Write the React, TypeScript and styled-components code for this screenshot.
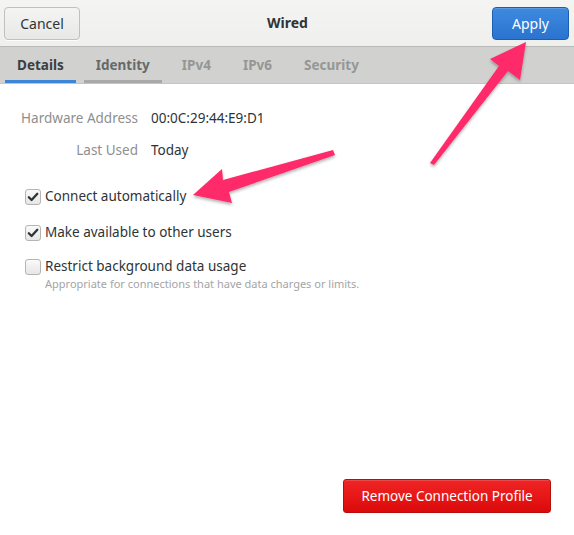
import React from "react";
import styled, { createGlobalStyle } from "styled-components";

const Global = createGlobalStyle`
  html, body { margin: 0; padding: 0; background: #ffffff; }
  body { font-family: "Noto Sans", "DejaVu Sans", sans-serif; color: #2e3436; }
  * { box-sizing: border-box; }
`;

const Window = styled.div`
  position: relative;
  width: 574px;
  height: 535px;
  display: flex;
  flex-direction: column;
  background: #ffffff;
  overflow: hidden;
`;

const HeaderBar = styled.div`
  height: 47px;
  flex: none;
  display: grid;
  grid-template-columns: 1fr auto 1fr;
  align-items: center;
  padding: 0 5px 1px 4px;
  background: linear-gradient(#f4f4f3, #efefee);
  border-bottom: 1px solid #b9b9b6;
`;

const Title = styled.div`
  font-weight: 700;
  font-size: 14px;
  color: #2e3436;
  padding-left: 2px;
`;

const HeaderButton = styled.button<{ $primary?: boolean }>`
  justify-self: ${(p) => (p.$primary ? "end" : "start")};
  width: ${(p) => (p.$primary ? "77px" : "76px")};
  height: 33px;
  margin-top: 1px;
  border-radius: 4px;
  font-family: inherit;
  font-size: 14px;
  cursor: pointer;
  ${(p) =>
    p.$primary
      ? `
    color: #ffffff;
    background: linear-gradient(#3e8ae0, #2a73cf);
    border: 1px solid #1c5fb0;
    box-shadow: inset 0 1px rgba(255,255,255,0.15);
  `
      : `
    color: #2e3436;
    background: linear-gradient(#f4f4f3, #e8e8e7);
    border: 1px solid #c0c0bd;
    box-shadow: 0 1px rgba(255,255,255,0.8);
  `}
`;

const TabBar = styled.div`
  height: 37px;
  flex: none;
  display: flex;
  align-items: stretch;
  padding-left: 5px;
  gap: 8px;
  background: #d1d1cf;
  border-bottom: 1px solid #c4c4c1;
`;

const Tab = styled.div<{ $state: "active" | "hover" | "normal" }>`
  display: flex;
  align-items: center;
  justify-content: center;
  padding: 2px 12px 0;
  font-size: 13.5px;
  font-weight: 700;
  color: ${(p) => (p.$state === "active" ? "#3a3f41" : p.$state === "hover" ? "#66696a" : "#959796")};
  border-bottom: 3px solid
    ${(p) => (p.$state === "active" ? "#3d85d8" : p.$state === "hover" ? "#a9a9a7" : "transparent")};
`;

const Body = styled.div`
  flex: 1;
  display: flex;
  flex-direction: column;
  padding: 24px 23px 21px 21px;
`;

const InfoGrid = styled.div`
  display: grid;
  grid-template-columns: 117px auto;
  column-gap: 13px;
  row-gap: 12px;
  font-size: 13.5px;
  line-height: 20px;
`;

const InfoLabel = styled.div`
  text-align: right;
  color: #8d8f8f;
  white-space: nowrap;
`;

const InfoValue = styled.div`
  color: #2e3436;
`;

const Checks = styled.div`
  display: flex;
  flex-direction: column;
  gap: 16px;
  margin-top: 26px;
  padding-left: 4px;
`;

const CheckRow = styled.label<{ $tight?: boolean }>`
  display: flex;
  align-items: flex-start;
  gap: 4px;
  font-size: 13.5px;
  line-height: 20px;
  color: #2e3436;
  margin-top: ${(p) => (p.$tight ? "-2px" : "0")};
`;

const Box = styled.span`
  width: 16px;
  height: 16px;
  margin-top: 3px;
  flex: none;
  display: flex;
  align-items: center;
  justify-content: center;
  border: 1px solid #b4b4b1;
  border-radius: 3px;
  background: linear-gradient(#fafafa, #e6e6e5);
`;

const CheckText = styled.div`
  display: flex;
  flex-direction: column;
`;

const Hint = styled.div`
  font-size: 11px;
  line-height: 14px;
  margin-top: 1px;
  color: #a3a5a5;
`;

const Footer = styled.div`
  margin-top: auto;
  display: flex;
  justify-content: flex-end;
`;

const DangerButton = styled.button`
  width: 208px;
  height: 34px;
  margin-bottom: 1px;
  border-radius: 3px;
  border: 1px solid #b60d0d;
  background: linear-gradient(#f02525, #dc0a0a);
  color: #ffffff;
  font-family: inherit;
  font-size: 13.5px;
  box-shadow: inset 0 1px rgba(255, 255, 255, 0.15);
`;

const Overlay = styled.svg`
  position: absolute;
  left: 0;
  top: 0;
  pointer-events: none;
`;

const Check = ({ on }: { on: boolean }) => (
  <Box>
    {on && (
      <svg width="12" height="12" viewBox="0 0 12 12">
        <path d="M1.8 6.2 L4.6 9 L10.3 2.8" fill="none" stroke="#2e3436" strokeWidth="2.3" strokeLinecap="round" strokeLinejoin="round" />
      </svg>
    )}
  </Box>
);

export default function App() {
  return (
    <>
      <Global />
      <Window>
        <HeaderBar>
          <HeaderButton>Cancel</HeaderButton>
          <Title>Wired</Title>
          <HeaderButton $primary>Apply</HeaderButton>
        </HeaderBar>
        <TabBar>
          <Tab $state="active">Details</Tab>
          <Tab $state="hover">Identity</Tab>
          <Tab $state="normal">IPv4</Tab>
          <Tab $state="normal">IPv6</Tab>
          <Tab $state="normal">Security</Tab>
        </TabBar>
        <Body>
          <InfoGrid>
            <InfoLabel>Hardware Address</InfoLabel>
            <InfoValue>00:0C:29:44:E9:D1</InfoValue>
            <InfoLabel>Last Used</InfoLabel>
            <InfoValue>Today</InfoValue>
          </InfoGrid>
          <Checks>
            <CheckRow>
              <Check on />
              <CheckText>Connect automatically</CheckText>
            </CheckRow>
            <CheckRow>
              <Check on />
              <CheckText>Make available to other users</CheckText>
            </CheckRow>
            <CheckRow $tight>
              <Check on={false} />
              <CheckText>
                Restrict background data usage
                <Hint>Appropriate for connections that have data charges or limits.</Hint>
              </CheckText>
            </CheckRow>
          </Checks>
          <Footer>
            <DangerButton>Remove Connection Profile</DangerButton>
          </Footer>
        </Body>
        <Overlay width="574" height="535" viewBox="0 0 574 535">
          <defs>
            <filter id="sh" x="-20%" y="-20%" width="140%" height="140%">
              <feDropShadow dx="0" dy="2" stdDeviation="1.5" floodColor="#000" floodOpacity="0.3" />
            </filter>
          </defs>
          <g fill="#ff2a6a" filter="url(#sh)">
            <polygon points="193,195 222,169 223,180 333,150 335,155 229,192 232,203" />
            <polygon points="526,42 520,80 508,71 434,165 430,163 499,66 490,59" />
          </g>
        </Overlay>
      </Window>
    </>
  );
}
